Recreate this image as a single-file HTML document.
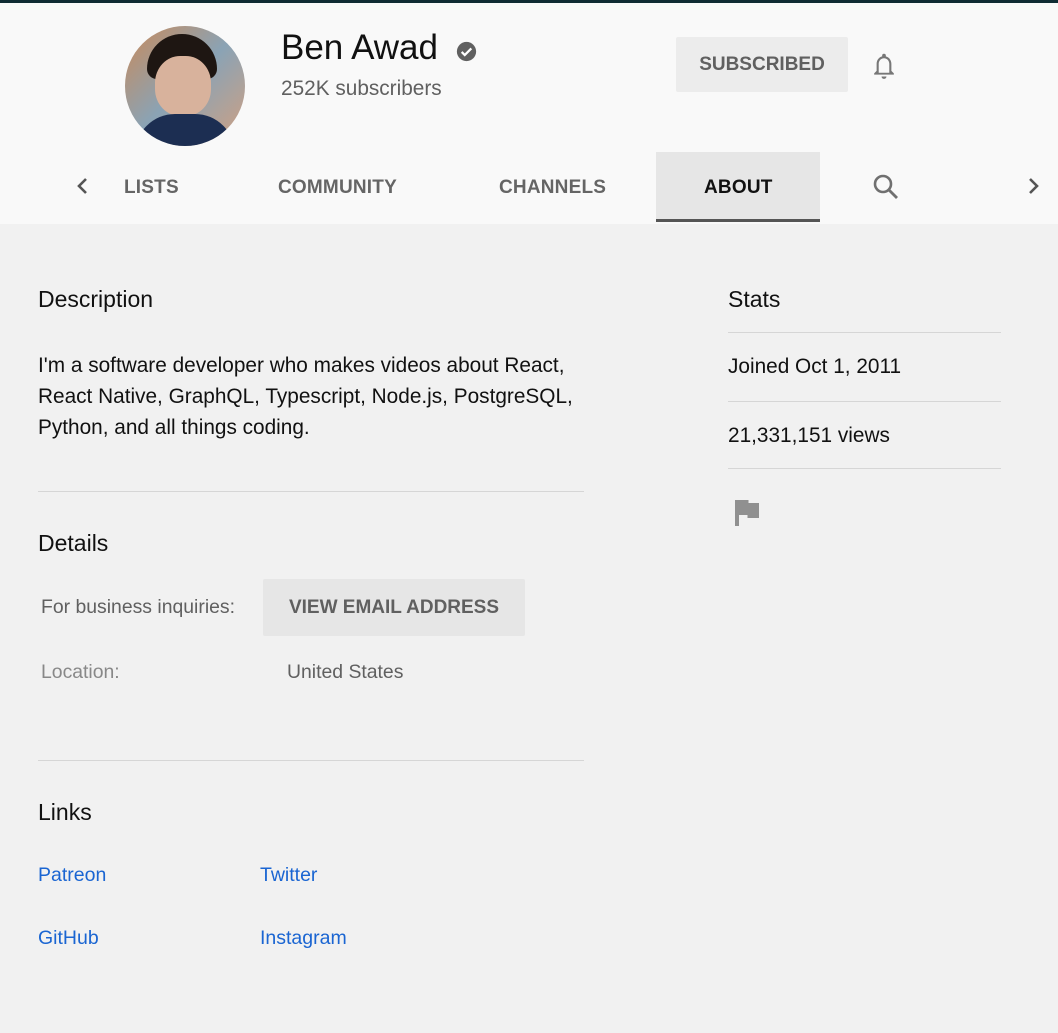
<!DOCTYPE html>
<html><head><meta charset="utf-8"><style>
*{margin:0;padding:0;box-sizing:border-box}
body{width:1058px;height:1033px;background:#f1f1f1;font-family:"Liberation Sans",sans-serif;position:relative;overflow:hidden;color:#111}
.top{position:absolute;left:0;top:0;width:1058px;height:3px;background:#0f2b33}
.hdr{position:absolute;left:0;top:3px;width:1058px;height:221px;background:#f9f9f9}
.a{position:absolute}
.av{left:125px;top:26px;width:120px;height:120px;border-radius:50%;overflow:hidden;background:linear-gradient(135deg,#c98a5a,#8aa3b5 50%,#d2a080)}
.tab{top:177px;font-size:19px;color:#656565;font-weight:bold;letter-spacing:0.2px}
.hd{font-size:23px;color:#111}
.bd{font-size:20.8px;line-height:31px;color:#111}
.hr{height:1px;background:#d6d6d6}
.lnk{font-size:19.5px;color:#1a65d2}
</style></head><body>
<div class="top"></div>
<div class="hdr"></div>
<div class="a av"><div style="position:absolute;left:22px;top:8px;width:70px;height:45px;border-radius:35px 35px 10px 10px;background:#1e1612"></div><div style="position:absolute;left:30px;top:30px;width:56px;height:60px;border-radius:45%;background:#d8b29c"></div><div style="position:absolute;left:10px;top:88px;width:100px;height:40px;background:#1c2e52;border-radius:40px 40px 0 0"></div></div>
<div class="a" style="left:281px;top:28px;font-size:35px;color:#111">Ben Awad</div>
<svg class="a" style="left:456px;top:41px" width="21" height="21" viewBox="0 0 24 24"><circle cx="12" cy="12" r="11" fill="#606060"/><path d="M6.5 12.5l3.5 3.5 7.5-7.5" stroke="#fff" stroke-width="2.6" fill="none"/></svg>
<div class="a" style="left:281px;top:77px;font-size:20.8px;color:#606060">252K subscribers</div>
<div class="a" style="left:676px;top:37px;width:172px;height:55px;background:#ececec;border-radius:2px;color:#606060;font-size:19px;font-weight:bold;text-align:center;line-height:55px">SUBSCRIBED</div>
<svg class="a" style="left:869px;top:50px" width="30" height="32" viewBox="0 0 24 26"><path d="M12 3a1.5 1.5 0 011.5 1.5v.7c2.8.7 4.5 3.2 4.5 6.1V17l2 2v1H4v-1l2-2v-5.7c0-2.9 1.7-5.4 4.5-6.1v-.7A1.5 1.5 0 0112 3zM7.7 18.5h8.6V11.3c0-2.5-1.8-4.6-4.3-4.6S7.7 8.8 7.7 11.3z M10 21.5h4a2 2 0 01-4 0z" fill="#777"/></svg>
<svg class="a" style="left:74px;top:176px" width="18" height="20" viewBox="0 0 18 20"><path d="M12 3L5 10l7 7" stroke="#555" stroke-width="2.6" fill="none"/></svg>
<div class="a tab" style="left:124px">LISTS</div>
<div class="a tab" style="left:278px">COMMUNITY</div>
<div class="a tab" style="left:499px">CHANNELS</div>
<div class="a" style="left:656px;top:152px;width:164px;height:70px;background:#e6e6e6;border-bottom:3px solid #555"></div>
<div class="a tab" style="left:704px;color:#111">ABOUT</div>
<svg class="a" style="left:871px;top:172px" width="30" height="30" viewBox="0 0 30 30"><circle cx="12" cy="12" r="8" stroke="#707070" stroke-width="2.6" fill="none"/><path d="M18 18l8 8" stroke="#707070" stroke-width="2.8"/></svg>
<svg class="a" style="left:1024px;top:176px" width="18" height="20" viewBox="0 0 18 20"><path d="M6 3l7 7-7 7" stroke="#555" stroke-width="2.6" fill="none"/></svg>

<div class="a hd" style="left:38px;top:286px">Description</div>
<div class="a bd" style="left:38px;top:350px;width:600px">I'm a software developer who makes videos about React,<br>React Native, GraphQL, Typescript, Node.js, PostgreSQL,<br>Python, and all things coding.</div>
<div class="a hr" style="left:38px;top:491px;width:546px"></div>
<div class="a hd" style="left:38px;top:530px">Details</div>
<div class="a" style="left:41px;top:596px;font-size:19.4px;color:#606060">For business inquiries:</div>
<div class="a" style="left:263px;top:579px;width:262px;height:57px;background:#e6e6e6;border-radius:2px;text-align:center;line-height:57px;font-size:19px;font-weight:bold;color:#606060">VIEW EMAIL ADDRESS</div>
<div class="a" style="left:41px;top:661px;font-size:19.4px;color:#888">Location:</div>
<div class="a" style="left:287px;top:661px;font-size:19.4px;color:#606060">United States</div>
<div class="a hr" style="left:38px;top:760px;width:546px"></div>
<div class="a hd" style="left:38px;top:799px">Links</div>
<div class="a lnk" style="left:38px;top:864px">Patreon</div>
<div class="a lnk" style="left:260px;top:864px">Twitter</div>
<div class="a lnk" style="left:38px;top:927px">GitHub</div>
<div class="a lnk" style="left:260px;top:927px">Instagram</div>

<div class="a hd" style="left:728px;top:286px">Stats</div>
<div class="a hr" style="left:728px;top:332px;width:273px"></div>
<div class="a bd" style="left:728px;top:351px">Joined Oct 1, 2011</div>
<div class="a hr" style="left:728px;top:401px;width:273px"></div>
<div class="a bd" style="left:728px;top:420px">21,331,151 views</div>
<div class="a hr" style="left:728px;top:468px;width:273px"></div>
<svg class="a" style="left:735px;top:500px" width="24" height="26" viewBox="0 0 24 26"><path d="M0 0h13.5v3H24v15H12.5v-3H4v11H0z" fill="#909090"/></svg>
</body></html>
